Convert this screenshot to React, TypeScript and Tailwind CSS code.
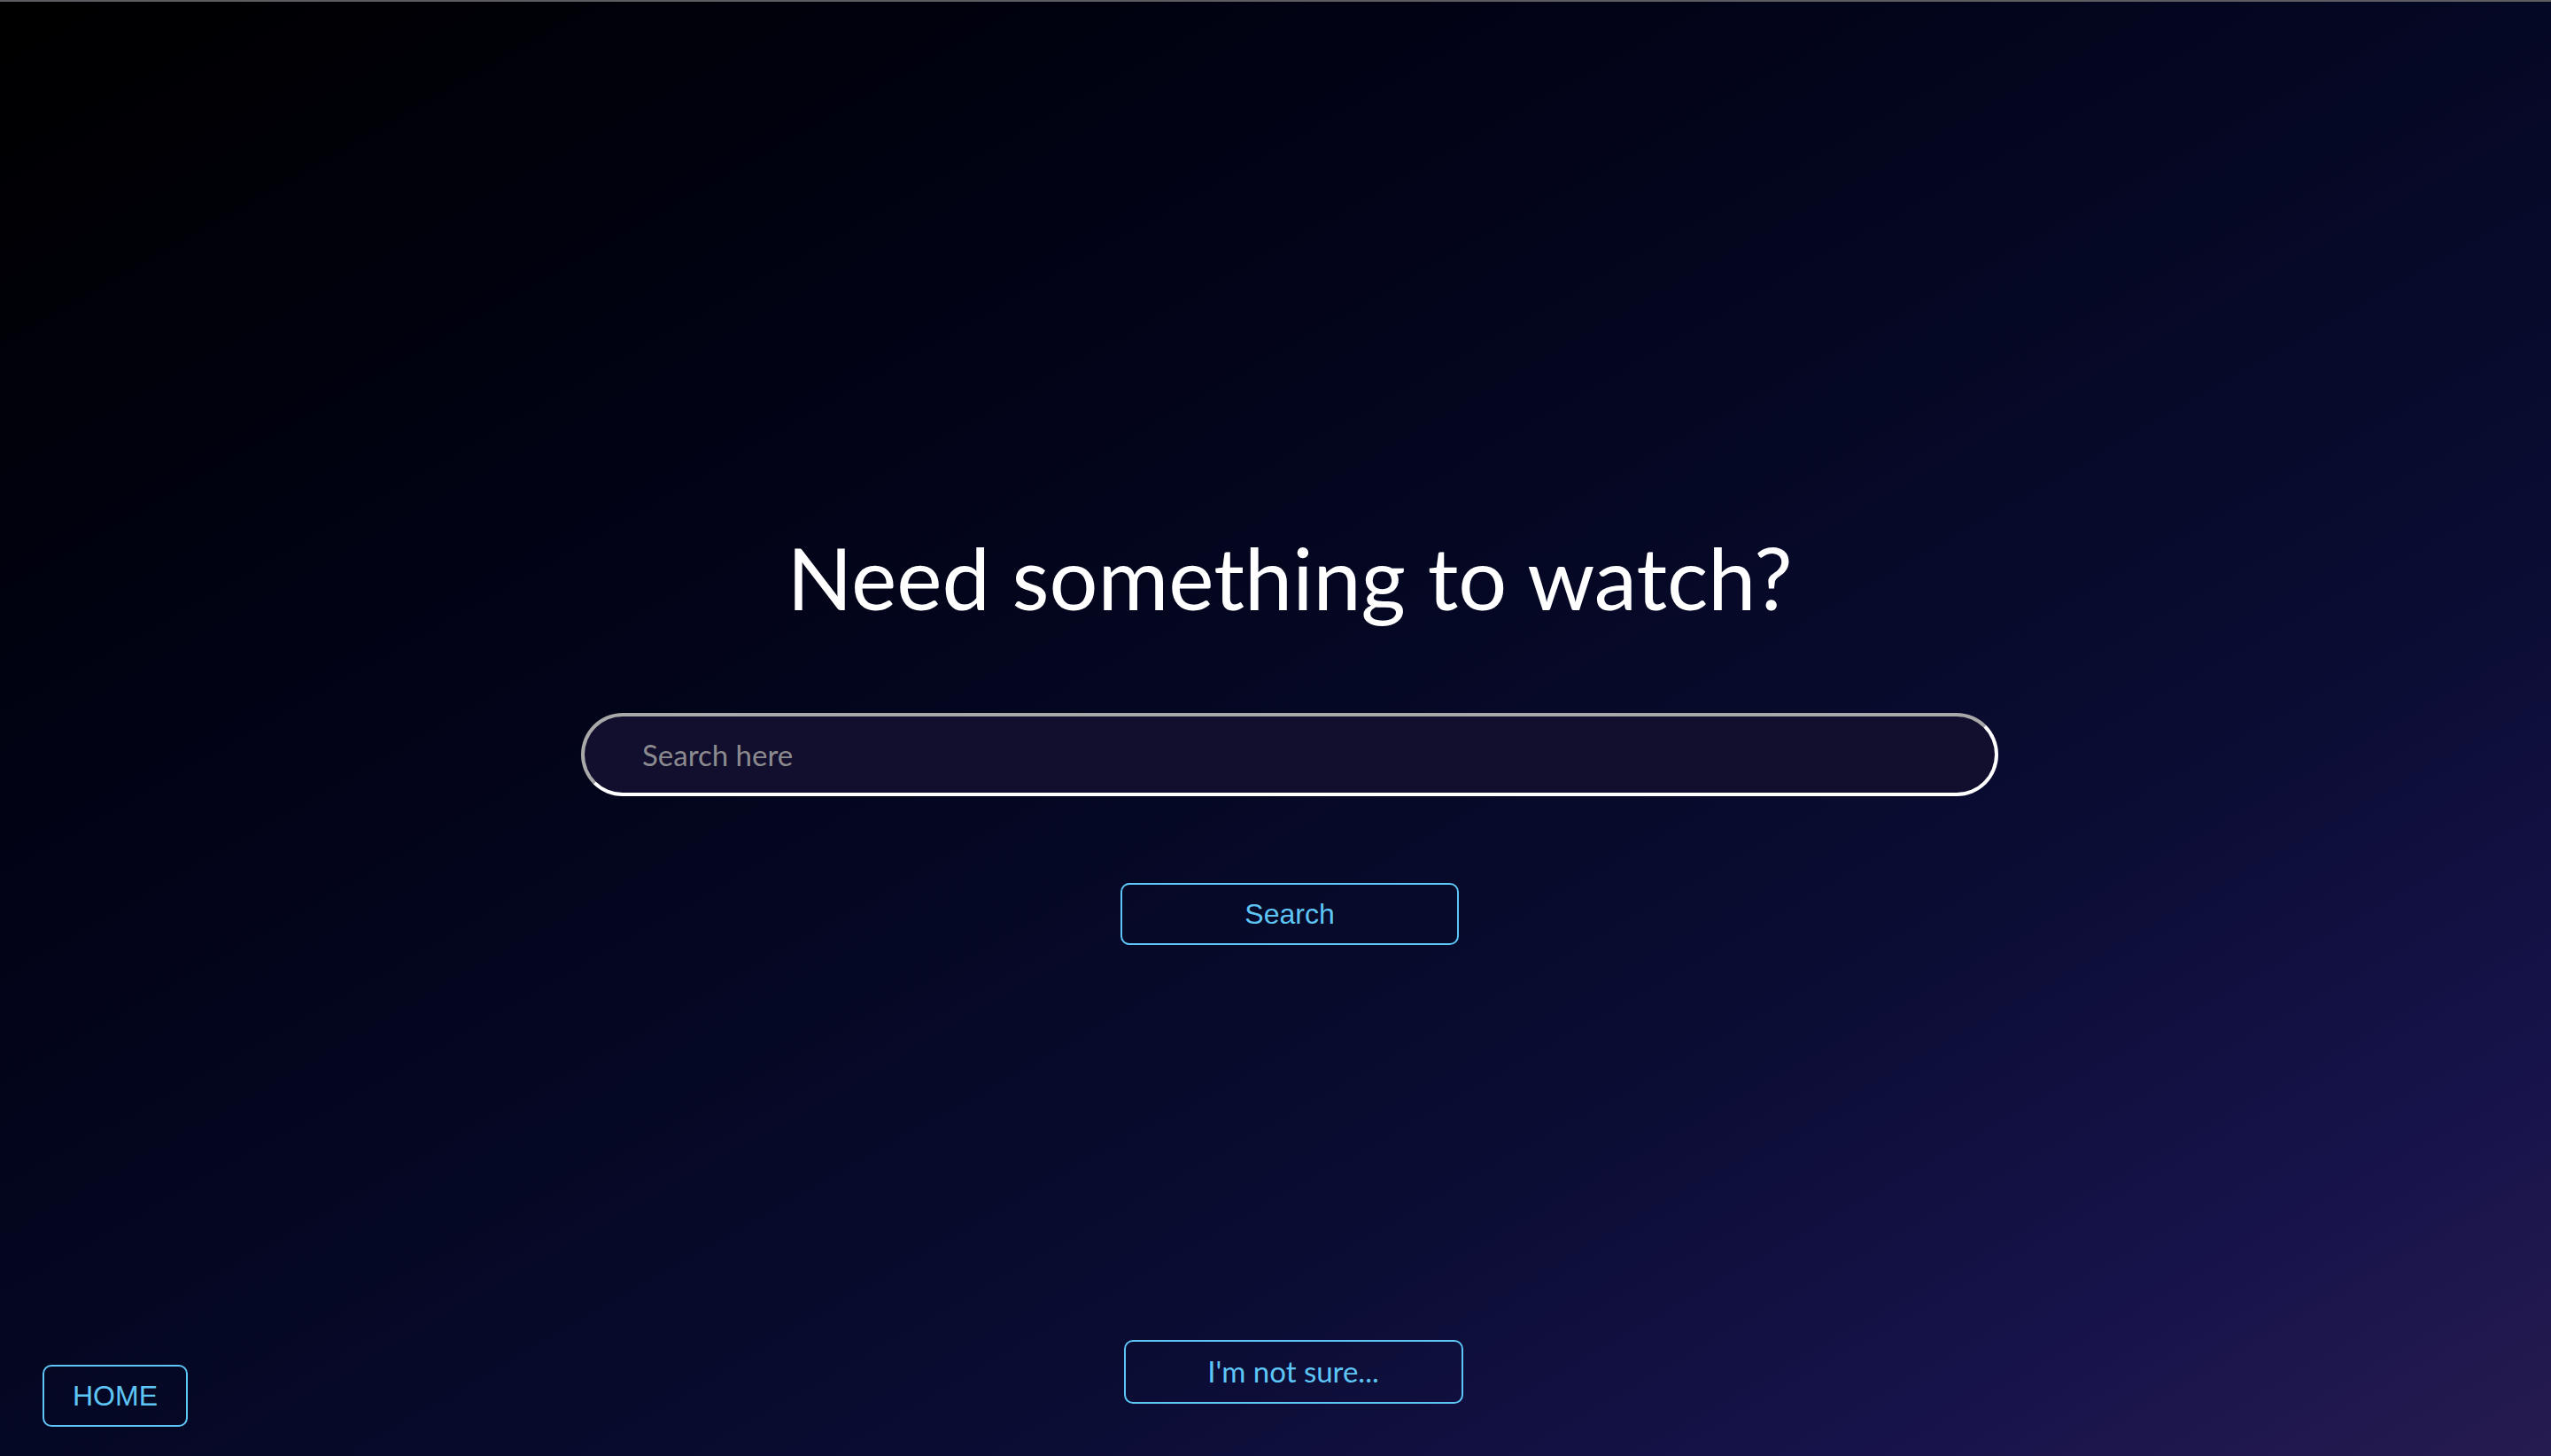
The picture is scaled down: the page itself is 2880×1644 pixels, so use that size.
import React, { useState } from "react";

const App: React.FC = () => {
  const [query, setQuery] = useState<string>("");

  return (
    <div className="h-[1644px] flex flex-col border-t-2 border-[#5c5c61] bg-[linear-gradient(to_bottom_right,#000000_0%,#010214_28%,#050824_50%,#0a0c32_68%,#16134a_86%,#261b50_100%)]">
      {/* Search Section */}
      <main className="flex-1 flex flex-col items-center pl-8 pt-[601px]">
        <h1 className="text-[97px] leading-none text-white font-['Lato','Open_Sans',sans-serif]">
          Need something to watch?
        </h1>
        <input
          type="text"
          value={query}
          onChange={(e) => setQuery(e.target.value)}
          placeholder="Search here"
          className="mt-[105px] w-[1600px] h-[94px] rounded-full border-[4px] border-t-[#a9a9a9] border-l-[#a9a9a9] border-b-white border-r-white bg-[#120e2d] pl-[65px] pr-10 text-[33px] text-white placeholder:text-[#8b8b8f] outline-none font-['Lato','Open_Sans',sans-serif]"
        />
        <button className="mt-[98px] w-[382px] h-[70px] rounded-[10px] border-2 border-[#5ec6f6] text-[32px] text-[#5ec6f6] font-['Liberation_Sans',Arial,sans-serif]">
          Search
        </button>
      </main>

      {/* Bottom Buttons */}
      <footer className="grid grid-cols-[1fr_auto_1fr] items-end pl-[40px] pb-[33px]">
        <div className="pl-2">
          <button className="w-[164px] h-[70px] rounded-[10px] border-2 border-[#5ec6f6] text-[32px] text-[#5ec6f6] font-['Liberation_Sans',Arial,sans-serif]">
            HOME
          </button>
        </div>
        <button className="mb-[26px] w-[383px] h-[72px] rounded-[10px] border-2 border-[#5ec6f6] text-[33px] text-[#5ec6f6] font-['Lato','Open_Sans',sans-serif]">
          I'm not sure...
        </button>
        <div />
      </footer>
    </div>
  );
};

export default App;
